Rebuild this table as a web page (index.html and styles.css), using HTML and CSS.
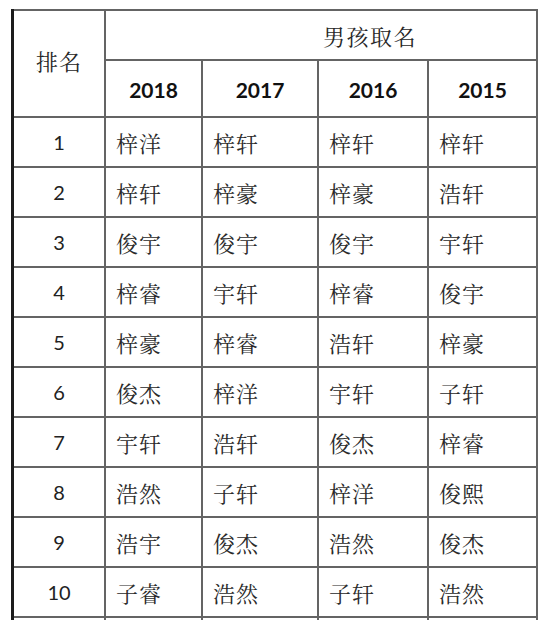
FILE: index.html
```html
<!DOCTYPE html>
<html lang="zh-CN">
<head>
<meta charset="utf-8">
<title>男孩取名</title>
<link rel="stylesheet" href="styles.css">
</head>
<body>
<div class="sheet">
  <div class="cell head-rank">排名</div>
  <div class="cell head-title">男孩取名</div>
  <div class="cell year">2018</div>
  <div class="cell year">2017</div>
  <div class="cell year">2016</div>
  <div class="cell year">2015</div>

  <div class="cell rank">1</div><div class="cell name">梓洋</div><div class="cell name">梓轩</div><div class="cell name">梓轩</div><div class="cell name">梓轩</div>
  <div class="cell rank">2</div><div class="cell name">梓轩</div><div class="cell name">梓豪</div><div class="cell name">梓豪</div><div class="cell name">浩轩</div>
  <div class="cell rank">3</div><div class="cell name">俊宇</div><div class="cell name">俊宇</div><div class="cell name">俊宇</div><div class="cell name">宇轩</div>
  <div class="cell rank">4</div><div class="cell name">梓睿</div><div class="cell name">宇轩</div><div class="cell name">梓睿</div><div class="cell name">俊宇</div>
  <div class="cell rank">5</div><div class="cell name">梓豪</div><div class="cell name">梓睿</div><div class="cell name">浩轩</div><div class="cell name">梓豪</div>
  <div class="cell rank">6</div><div class="cell name">俊杰</div><div class="cell name">梓洋</div><div class="cell name">宇轩</div><div class="cell name">子轩</div>
  <div class="cell rank">7</div><div class="cell name">宇轩</div><div class="cell name">浩轩</div><div class="cell name">俊杰</div><div class="cell name">梓睿</div>
  <div class="cell rank">8</div><div class="cell name">浩然</div><div class="cell name">子轩</div><div class="cell name">梓洋</div><div class="cell name">俊熙</div>
  <div class="cell rank">9</div><div class="cell name">浩宇</div><div class="cell name">俊杰</div><div class="cell name">浩然</div><div class="cell name">俊杰</div>
  <div class="cell rank">10</div><div class="cell name">子睿</div><div class="cell name">浩然</div><div class="cell name">子轩</div><div class="cell name">浩然</div>
  <div class="cell stub"></div><div class="cell stub"></div><div class="cell stub"></div><div class="cell stub"></div><div class="cell stub"></div>
</div>
</body>
</html>
```

FILE: styles.css
```css
html, body {
  margin: 0;
  padding: 0;
  background: #ffffff;
  overflow: hidden;
}

body {
  width: 538px;
  height: 620px;
}

.sheet {
  margin: 9px 0 0 11px;
  display: grid;
  grid-template-columns: 90px 95px 114px 108px 107px;
  grid-template-rows: 48px 55px repeat(10, 48px) 2px;
  gap: 2px;
  padding: 2px 2px 0 0;
  background: #646464;
  border-left: 3px solid #1c1c1c;
  width: 522px;
}

.cell {
  background: #ffffff;
  display: flex;
  align-items: center;
  color: #262626;
}

.head-rank {
  grid-row: 1 / span 2;
  grid-column: 1;
  justify-content: center;
  font-family: "Noto Serif CJK SC", "Noto Sans CJK SC", sans-serif;
  font-size: 22px;
  letter-spacing: 1px;
  padding-bottom: 6px;
  box-sizing: border-box;
}

.head-title {
  grid-column: 2 / span 4;
  justify-content: flex-start;
  padding-left: 217px;
  font-family: "Noto Serif CJK SC", "Noto Sans CJK SC", sans-serif;
  font-size: 22px;
  letter-spacing: 1.5px;
}

.year {
  justify-content: center;
  font-family: Lato, "Open Sans", sans-serif;
  font-weight: 700;
  font-size: 21px;
  color: #111111;
  padding-top: 2px;
}

.rank {
  justify-content: center;
  font-family: Lato, "Open Sans", sans-serif;
  font-size: 20px;
  color: #222222;
}

.name {
  justify-content: flex-start;
  padding-left: 10px;
  font-family: "Noto Serif CJK SC", "Noto Sans CJK SC", sans-serif;
  font-size: 22px;
  letter-spacing: 1px;
  color: #2a2a2a;
}
```
